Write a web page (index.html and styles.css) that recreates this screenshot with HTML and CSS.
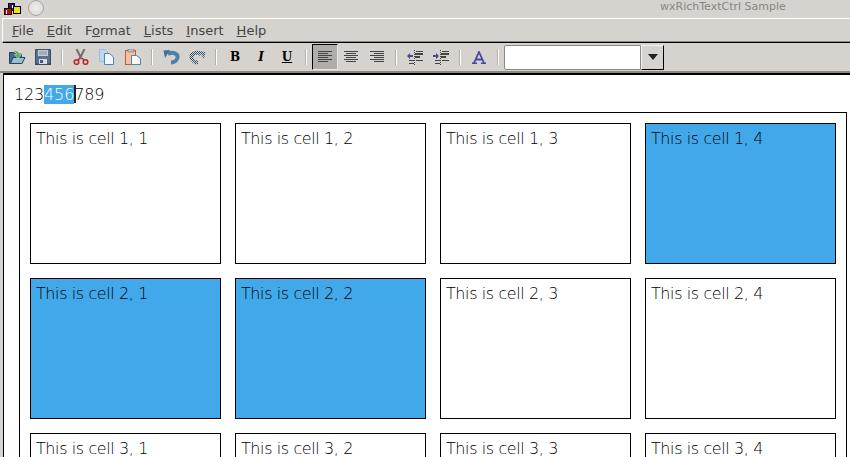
FILE: index.html
```html
<!DOCTYPE html>
<html>
	<head>
		<meta charset="UTF-8">
		<title>wxRichTextCtrl Sample</title>
		<link rel="stylesheet" href="styles.css">
	</head>
	<body>
		<div class="titlebar">
			<svg class="appicon" width="18" height="14" viewBox="0 0 18 14">
				<rect x="4.500" y="1.500" width="6" height="7" fill="#20206a" stroke="#000"/>
				<rect x="0.500" y="6.500" width="7" height="6" fill="#e00000" stroke="#000"/>
				<rect x="9.500" y="4.500" width="7" height="7" fill="#f0e020" stroke="#000"/>
				<rect x="2" y="8" width="1" height="4" fill="#fff"/>
				<rect x="8" y="3" width="1" height="3" fill="#fff"/>
			</svg>
			<span class="winbtn"></span>
			<span class="wintitle">wxRichTextCtrl Sample</span>
		</div>
		<div class="menubar">
			<span><u>F</u>ile</span>
			<span><u>E</u>dit</span>
			<span>F<u>o</u>rmat</span>
			<span><u>L</u>ists</span>
			<span><u>I</u>nsert</span>
			<span><u>H</u>elp</span>
		</div>
		<div class="toolbar">
			<span class="tool">
				<svg width="18" height="18" viewBox="0 0 18 18">
					<path d="M1.500 4.500h5l1 1.500h6v9.500h-12z" fill="#3f6a8c" stroke="#1f4668"/>
					<path d="M2.500 15.500l2.500-6h12l-3 6z" fill="#9fbdd2" stroke="#1f4668"/>
					<path d="M6 2.500c3.500 0 5 1.500 5.500 4h2l-3.500 4.500-3.500-4.500h2c-0.200-1.500-1-2.500-2.500-2.500z" fill="#58b058" stroke="#d8e8d8" stroke-width="0.500"/>
				</svg>
			</span>
			<span class="tool">
				<svg width="16" height="16" viewBox="0 0 16 16">
					<path d="M0.500 0.500h15v14.500h-15z" fill="#56708e" stroke="#3b4a60"/>
					<rect x="3" y="1" width="10" height="6" fill="#c8ccd2"/>
					<path d="M4 3h8M4 5h8" stroke="#7b8ea4"/>
					<rect x="4" y="10" width="8" height="5" fill="#d8dde2"/>
					<rect x="5" y="11" width="3" height="3" fill="#3f5a7a"/>
					<path d="M0 15.500h16" stroke="#3b4a60"/>
				</svg>
			</span>
			<i class="sep"></i>
			<span class="tool">
				<svg width="16" height="16" viewBox="0 0 16 16">
					<path d="M3.500 0l5 10M11.500 0l-5 10" stroke="#6f6f6f" stroke-width="2" fill="none"/>
					<circle cx="3.500" cy="13" r="2.300" fill="none" stroke="#c8202a" stroke-width="1.600"/>
					<circle cx="12.500" cy="13" r="2.300" fill="none" stroke="#c8202a" stroke-width="1.600"/>
					<path d="M5 11l2-2M11 11l-2-2" stroke="#c8202a" stroke-width="1.500"/>
				</svg>
			</span>
			<span class="tool">
				<svg width="16" height="16" viewBox="0 0 16 16">
					<path d="M0.500 0.500h6l2 2v10h-8z" fill="#bcd8f0" stroke="#9cc0dc"/>
					<path d="M5.500 4.500h5l4 3.500v7.500h-9z" fill="#f0f6fb" stroke="#4f86b4"/>
				</svg>
			</span>
			<span class="tool">
				<svg width="16" height="16" viewBox="0 0 16 16">
					<rect x="0.500" y="1.500" width="10" height="14" fill="#f4c0a0" stroke="#c05a3a"/>
					<rect x="3" y="0" width="6" height="3" fill="#c0c0c0" stroke="#6f6f6f" stroke-width="0.600"/>
					<path d="M6.500 6.500h5l4 3v6h-9z" fill="#f4f8fc" stroke="#4f86b4"/>
				</svg>
			</span>
			<i class="sep"></i>
			<span class="tool">
				<svg width="17" height="16" viewBox="0 0 17 16">
					<path d="M5 5C10 2.500 15 4.500 14.500 8.500 14 11.500 11 13.500 8 13.500" fill="none" stroke="#4a80ac" stroke-width="4"/>
					<path d="M0.500 1.500L7 1 2 9z" fill="#3f7098"/>
				</svg>
			</span>
			<span class="tool">
				<svg width="17" height="16" viewBox="0 0 17 16">
					<defs>
						<pattern id="chk" width="2" height="2" patternUnits="userSpaceOnUse">
							<rect width="1" height="1" fill="#2f5070"/>
							<rect x="1" y="1" width="1" height="1" fill="#2f5070"/>
						</pattern>
					</defs>
					<path d="M12 5C7 2.500 2 4.500 2.500 8.500 3 11.500 6 13.500 9 13.500" fill="none" stroke="url(#chk)" stroke-width="4"/>
					<path d="M16.500 3L10 2 15 10z" fill="url(#chk)"/>
				</svg>
			</span>
			<i class="sep"></i>
			<span class="tool letter"><b>B</b></span>
			<span class="tool letter"><b><em>I</em></b></span>
			<span class="tool letter"><b><u>U</u></b></span>
			<i class="sep"></i>
			<span class="tool active">
				<svg width="14" height="12" viewBox="0 0 14 12">
					<path d="M0 .5h14M0 2.500h10M0 4.500h14M0 6.500h10M0 8.500h14M0 10.500h10" stroke="#444" fill="none"/>
				</svg>
			</span>
			<span class="tool">
				<svg width="14" height="12" viewBox="0 0 14 12">
					<path d="M0 .5h14M2 2.500h10M0 4.500h14M2 6.500h10M0 8.500h14M2 10.500h10" stroke="#444" fill="none"/>
				</svg>
			</span>
			<span class="tool">
				<svg width="14" height="12" viewBox="0 0 14 12">
					<path d="M0 .5h14M4 2.500h10M0 4.500h14M4 6.500h10M0 8.500h14M4 10.500h10" stroke="#444" fill="none"/>
				</svg>
			</span>
			<i class="sep"></i>
			<span class="tool">
				<svg width="16" height="15" viewBox="0 0 16 15">
					<path d="M7.500 0v15" stroke="#444" stroke-dasharray="1 1"/>
					<path d="M9 1.500h7M2 10.500h5M9 10.500h7M2 13.500h5" stroke="#444" fill="none"/>
					<rect x="8" y="3" width="8" height="2" fill="#444"/>
					<rect x="8" y="6" width="5" height="2" fill="#444"/>
					<path d="M0 6l3-3v2h3v2h-3v2z" fill="#4848a0"/>
				</svg>
			</span>
			<span class="tool">
				<svg width="16" height="15" viewBox="0 0 16 15">
					<path d="M7.500 0v15" stroke="#444" stroke-dasharray="1 1"/>
					<path d="M9 1.500h7M2 10.500h5M9 10.500h7M2 13.500h5" stroke="#444" fill="none"/>
					<rect x="8" y="3" width="8" height="2" fill="#444"/>
					<rect x="8" y="6" width="5" height="2" fill="#444"/>
					<path d="M6 6l-3-3v2h-3v2h3v2z" fill="#4848a0"/>
				</svg>
			</span>
			<i class="sep"></i>
			<span class="tool">
				<svg width="14" height="13" viewBox="0 0 14 13">
					<path d="M0 12.300h5M9 12.300h5M2 12l5-11 5 11M4 8.500h6" stroke="#4848a0" stroke-width="1.800" fill="none"/>
				</svg>
			</span>
			<i class="sep"></i>
			<div class="combo">
				<div class="combo-input"></div>
				<div class="combo-btn"><i class="arrow"></i></div>
			</div>
		</div>
		<div class="editor">
			<p class="line">123<span class="sel">456</span><span class="caret"></span>789</p>
			<div class="table">
				<div class="cell">This is cell 1, 1</div>
				<div class="cell">This is cell 1, 2</div>
				<div class="cell">This is cell 1, 3</div>
				<div class="cell blue">This is cell 1, 4</div>
				<div class="cell blue">This is cell 2, 1</div>
				<div class="cell blue">This is cell 2, 2</div>
				<div class="cell">This is cell 2, 3</div>
				<div class="cell">This is cell 2, 4</div>
				<div class="cell">This is cell 3, 1</div>
				<div class="cell">This is cell 3, 2</div>
				<div class="cell">This is cell 3, 3</div>
				<div class="cell">This is cell 3, 4</div>
			</div>
		</div>
	</body>
</html>
```
FILE: styles.css
```css
*{
	margin: 0;
	padding: 0;
	box-sizing: border-box;
}
html,body{
	width: 850px;
	height: 457px;
	overflow: hidden;
}
body{
	background: #d6d2ce;
	font-family: "DejaVu Sans", sans-serif;
}
.titlebar{
	height: 18px;
	display: flex;
	align-items: center;
	position: relative;
}
.appicon{
	margin-left: 4px;
}
.winbtn{
	width: 16px;
	height: 16px;
	margin: -3px 0 0 6px;
	border-radius: 50%;
	background: radial-gradient(circle, #f0eeec, #d8d4d0);
	border: 1px solid #a8a4a0;
}
.wintitle{
	position: absolute;
	left: 660px;
	top: 0;
	font-size: 11px;
	line-height: 13px;
	color: #8a8683;
}
.menubar{
	height: 25px;
	margin-left: 2px;
	padding: 3px 0 0 9px;
	display: flex;
	gap: 13px;
	border-top: 1px solid #fff;
	border-left: 1px solid #fff;
	border-bottom: 1px solid #000;
	box-shadow: inset 0 -1px 0 #8c8884;
	font-size: 13px;
	line-height: 18px;
	color: #444;
}
.toolbar{
	height: 30px;
	padding: 0 0 0 4px;
	display: flex;
	align-items: center;
	border-bottom: 2px solid #8c8884;
}
.tool{
	width: 26px;
	height: 26px;
	display: flex;
	align-items: center;
	justify-content: center;
	flex: none;
}
.letter{
	font-family: "DejaVu Serif", serif;
	font-size: 12px;
	color: #000;
}
.active{
	background: #b2aca8;
	border: 1px solid;
	border-color: #000 #e8e6e4 #e8e6e4 #000;
}
.sep{
	width: 2px;
	height: 16px;
	margin: 0 5px;
	background: #fff;
	border-left: 1px solid #b4b0ac;
	flex: none;
}
.combo{
	display: flex;
	height: 25px;
}
.combo-input{
	width: 137px;
	background: #fff;
	border: 1px solid #8c8884;
	border-radius: 2px 0 0 2px;
}
.combo-btn{
	width: 23px;
	display: flex;
	align-items: center;
	justify-content: center;
	border: 1px solid;
	border-color: #f4f2f0 #000 #000 #f4f2f0;
}
.arrow{
	border-top: 6px solid #222;
	border-left: 5px solid transparent;
	border-right: 5px solid transparent;
}
.editor{
	height: 384px;
	background: #fff;
	border-top: 2px solid #000;
	border-left: 1px solid #000;
	margin-left: 3px;
	padding: 10px 0 0 10px;
	color: #000;
	font-family: "DejaVu Sans", sans-serif;
	font-weight: 200;
	font-size: 16px;
	overflow: hidden;
}
.line{
	height: 20px;
	line-height: 20px;
	letter-spacing: -0.150px;
}
.sel{
	background: #41a9ea;
	color: #fff;
}
.caret{
	display: inline-block;
	width: 2px;
	height: 18px;
	margin-right: -2px;
	vertical-align: -3px;
	background: #222;
}
.table{
	width: 828px;
	margin: 7px 0 0 5px;
	padding: 10px;
	border: 1px solid #000;
	display: grid;
	grid-template-columns: repeat(4,191px);
	grid-auto-rows: 141px;
	gap: 14px;
}
.cell{
	border: 1px solid #000;
	padding: 5px;
	line-height: 20px;
	letter-spacing: -0.400px;
}
.blue{
	background: #41a9ea;
}
```
